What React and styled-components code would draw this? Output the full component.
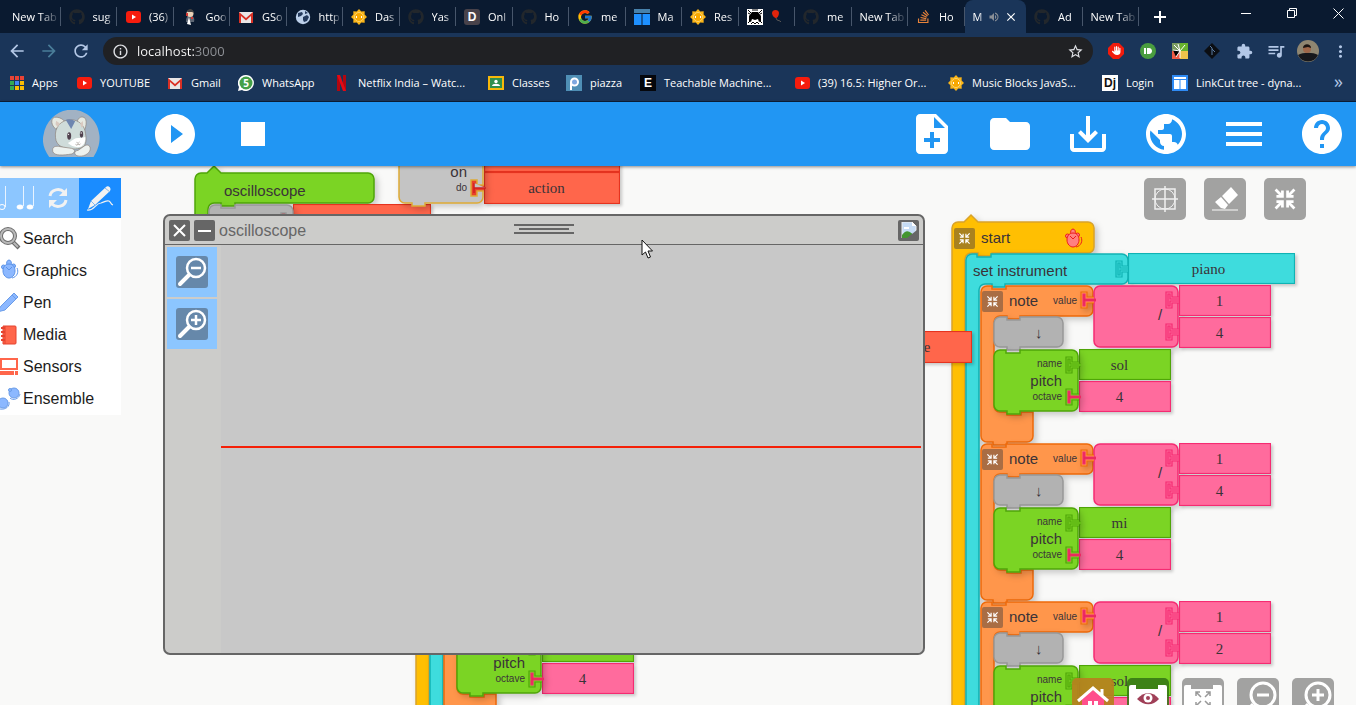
import React from "react";
import styled, { createGlobalStyle, css } from "styled-components";
import { FaGithub, FaStackOverflow, FaHand } from "react-icons/fa6";
import { FcGoogle } from "react-icons/fc";
import {
  MdArrowBack, MdArrowForward, MdRefresh, MdInfoOutline, MdStarBorder, MdExtension, MdQueueMusic,
  MdMoreVert, MdPlayCircleFilled, MdStop, MdNoteAdd, MdFolder, MdSaveAlt, MdPublic, MdMenu, MdHelp,
  MdVolumeUp, MdClose,
} from "react-icons/md";

const Global = createGlobalStyle`
  *, *::before, *::after { box-sizing: border-box; }
  body { margin: 0; overflow: hidden; font-family: "Liberation Sans", Arial, sans-serif; }
  button { font: inherit; color: inherit; background: none; border: 0; padding: 0; margin: 0; }
  svg { display: block; flex: none; }
`;

const Page = styled.div`
  display: flex;
  flex-direction: column;
  height: 100vh;
  background: #f9f9f8;
`;

/* ---------- browser ---------- */

const Browser = styled.header`
  flex: none;
  background: #1a3559;
  color: #fff;
  font-family: "Open Sans", "Noto Sans", sans-serif;
  font-size: 11px;
  border-bottom: 1px solid #0c1f38;
`;
const TabStrip = styled.div`
  display: flex;
  height: 33px;
  background: #0a1a30;
  padding-left: 4px;
`;
const Tabs = styled.div`
  display: flex;
  flex: 0 1 1135px;
  min-width: 0;
`;
const Tab = styled.button`
  position: relative;
  flex: 1 1 0;
  min-width: 0;
  display: flex;
  align-items: center;
  gap: 8px;
  padding: 0 3px 0 8px;
  ${(p) => p.$active
    ? css`background: #1a3559; border-radius: 8px 8px 0 0; gap: 4px; padding-right: 8px;`
    : css`&::after { content: ""; position: absolute; right: 0; top: 7px; height: 19px; width: 1px; background: #47566b; }`}
`;
const TabTitle = styled.span`
  flex: 1 1 0;
  min-width: 0;
  overflow: hidden;
  white-space: nowrap;
  text-align: left;
  mask-image: linear-gradient(to right, #000 60%, transparent 105%);
`;
const NewTabButton = styled.button`
  width: 42px;
  display: grid;
  place-items: center;
`;
const WindowControls = styled.div`
  display: flex;
  gap: 10px;
  margin-left: auto;
`;
const WindowControl = styled.button`
  width: 36px;
  height: 26px;
  display: grid;
  place-items: center;
`;
const Toolbar = styled.div`
  display: flex;
  align-items: center;
  height: 36px;
  padding-left: 1px;
`;
const ToolIcon = styled.button`
  width: 32px;
  height: 32px;
  display: grid;
  place-items: center;
  color: ${(p) => p.$color || "#b3c7e6"};
`;
const Omnibox = styled.label`
  flex: 1;
  display: flex;
  align-items: center;
  gap: 8px;
  height: 28px;
  margin: 0 7px 0 6px;
  padding: 0 9px;
  border-radius: 14px;
  background: #202124;
  color: #dfe1e5;
`;
const Address = styled.input`
  flex: 1;
  min-width: 0;
  border: 0;
  padding: 0;
  outline: 0;
  font-family: inherit;
  font-size: 13px;
  color: transparent;
  background: linear-gradient(to right, #fff 57px, #8f9297 57px);
  background-clip: text;
  -webkit-background-clip: text;
`;
const Bookmarks = styled.nav`
  display: flex;
  align-items: center;
  height: 32px;
  padding: 0 13px 4px 8px;
`;
const Bookmark = styled.a`
  flex: 0 0 ${(p) => p.$width}px;
  display: flex;
  align-items: center;
  gap: 8px;
  color: #fff;
  font-size: 11px;
  line-height: 16px;
  text-decoration: none;
  white-space: nowrap;
`;
const More = styled.button`
  margin-left: auto;
  padding-bottom: 4px;
  font-size: 18px;
  line-height: 16px;
  color: #b3c7e6;
`;
const LetterIcon = styled.span`
  flex: none;
  width: 16px;
  height: 16px;
  border-radius: ${(p) => p.$radius || 0}px;
  background: ${(p) => p.$bg};
  color: ${(p) => p.$fg || "#fff"};
  font: bold 12px/16px "Liberation Sans", sans-serif;
  text-align: center;
`;

const Github = () => <FaGithub size={16} color="#22272c" />;
const Youtube = () => (
  <svg width="16" height="16" viewBox="0 0 16 16"><rect x="1" y="2" width="15" height="12" rx="3" fill="#f61c0d" /><path d="M7 5.600v5l4-2.500z" fill="#fff" /></svg>
);
const Gmail = () => (
  <svg width="16" height="16" viewBox="0 0 16 16"><path d="M1 3h14v11H1z" fill="#e9e6e6" /><path d="M1 14V3l7 6 7-6v11h-2V7l-5 4.500L3 7v7z" fill="#d93025" /></svg>
);
const Sun = () => (
  <svg width="16" height="16" viewBox="0 0 16 16">
    <path d="M8 0l2.300 2.400 3.400-.200-.1 3.400L16 8l-2.400 2.300.1 3.400-3.400-.1L8 16l-2.300-2.400-3.400.1.1-3.400L0 8l2.400-2.400-.1-3.400 3.400.200z" fill="#fbb517" />
    <circle cx="8" cy="8" r="4.500" fill="#f9a800" stroke="#fbd56e" /><path d="M6 7l-1 1 1 1M10 7l1 1-1 1" stroke="#fff" fill="none" />
  </svg>
);
const Globe = () => (
  <svg width="16" height="16" viewBox="0 0 16 16"><circle cx="8" cy="8" r="7.200" fill="#bcd0ea" /><path d="M3 4l4-1 1 2-2 2-3 1zM8 8l4-2 2 2-2 4-3 1-1-2zM10 2l3 2-3 1z" fill="#22395c" /></svg>
);
const Jenkins = () => (
  <svg width="16" height="16" viewBox="0 0 16 16"><path d="M4 13c0-5 1-6 4-6s5 1 4 6z" fill="#5c6674" /><circle cx="8" cy="4.500" r="3.500" fill="#ecd2b8" /><path d="M5 3c1-4 6-4 7 1l-2-1z" fill="#444" /><path d="M4 4h2v3H4z" fill="#d33833" /><path d="M7 8l2 8-4-1z" fill="#fff" /><path d="M9 8h2v2H9z" fill="#d33833" /></svg>
);
const Columns = ({ framed }) => framed
  ? <svg width="16" height="16" viewBox="0 0 16 16"><path d="M0 0h16v16H0z" fill="#2f8bf5" /><path d="M2 2h12v2H2zM2 5h5.500v9H2zM8.500 5H14v9H8.500z" fill="#fff" /></svg>
  : <svg width="16" height="16" viewBox="0 0 16 16"><path d="M0 0h16v4H0z" fill="#4781ab" /><path d="M0 5h7.500v11H0zM8.500 5H16v11H8.500z" fill="#1e90ff" /></svg>;
const Sketch = () => (
  <svg width="16" height="16" viewBox="0 0 16 16"><path d="M0 0h16v16H0z" fill="#fff" /><path d="M5 3h6l3 4v5l-2 1-1-3-3 1-3-1-1 3-2-1V7z" fill="#000" /><path d="M1 1l3 3M15 1l-3 3M1 4l2 1M15 4l-2 1M4 15l2-2 2 2 2-2 2 2M1 14l2-2M15 14l-2-2M5 1h6" stroke="#000" fill="none" /></svg>
);
const Balloon = () => (
  <svg width="11" height="13" viewBox="0 0 11 13"><path d="M1 3C1-1 8-1 8 3c0 3-2 5-3 5S1 6 1 3z" fill="#e0240c" /><path d="M5 8l1 2 3 1 1 1" stroke="#555" fill="none" /></svg>
);
const AppsGrid = () => (
  <svg width="16" height="16" viewBox="0 0 16 16">
    {["#ea4335", "#ea4335", "#ea4335", "#34a853", "#4285f4", "#fbbc04", "#34a853", "#fbbc04", "#fbbc04"].map((c, i) => (
      <rect key={i} x={2 + (i % 3) * 5} y={1 + Math.floor(i / 3) * 5} width="4" height="4" fill={c} />
    ))}
  </svg>
);
const WhatsApp = () => (
  <svg width="16" height="16" viewBox="0 0 16 16"><path d="M8 0a8 8 0 1 1-4 15l-4 1 1-4A8 8 0 0 1 8 0z" fill="#fff" /><circle cx="8" cy="8" r="6.500" fill="#43a047" /><text x="8" y="12" fontSize="10" fontWeight="bold" fill="#fff" textAnchor="middle">5</text></svg>
);
const Netflix = () => (
  <svg width="16" height="16" viewBox="0 0 16 16"><path d="M3 0h3v16H3zM9 0h3v16H9z" fill="#b20710" /><path d="M3 0h3l6 16H9z" fill="#e50914" /></svg>
);
const Classroom = () => (
  <svg width="16" height="16" viewBox="0 0 16 16"><path d="M0 1h16v14H0z" fill="#f7b80a" /><path d="M2 3h12v10H2z" fill="#2f8f4e" /><circle cx="8" cy="6.500" r="1.700" fill="#fff" /><path d="M4 11c0-3 8-3 8 0z" fill="#fff" /></svg>
);
const Piazza = () => (
  <svg width="16" height="16" viewBox="0 0 16 16"><path d="M0 0h16v16H0z" fill="#4f8fb5" /><circle cx="8.500" cy="7" r="3.500" fill="#7fa8e0" stroke="#fff" strokeWidth="2" /><path d="M5 7v8" stroke="#fff" strokeWidth="2" /></svg>
);

const tabs = [
  [null, "New Tab"], [<Github />, "sug"], [<Youtube />, "(36)"], [<Jenkins />, "Goo"], [<Gmail />, "GSo"],
  [<Globe />, "http"], [<Sun />, "Das"], [<Github />, "Yas"],
  [<LetterIcon $bg="#48424a" $radius={3}>D</LetterIcon>, "Onl"], [<Github />, "Ho"], [<FcGoogle size={16} />, "me"],
  [<Columns />, "Ma"], [<Sun />, "Res"], [<Sketch />, <Balloon />], [<Github />, "me"], [null, "New Tab"],
  [<FaStackOverflow size={15} color="#e8833a" />, "Ho"], "active", [<Github />, "Ad"], [null, "New Tab"],
];
const bookmarks = [
  [<AppsGrid />, "Apps", 68], [<Youtube />, "YOUTUBE", 91], [<Gmail />, "Gmail", 71], [<WhatsApp />, "WhatsApp", 96],
  [<Netflix />, "Netflix India – Watc...", 154], [<Classroom />, "Classes", 78],
  [<Piazza />, "piazza", 74],
  [<LetterIcon $bg="#05070c">E</LetterIcon>, "Teachable Machine...", 154], [<Youtube />, "(39) 16.5: Higher Or...", 154],
  [<Sun />, "Music Blocks JavaS...", 154], [<LetterIcon $bg="#fff" $fg="#111">Dj</LetterIcon>, "Login", 70],
  [<Columns framed />, "LinkCut tree - dyna...", 134],
];

const BrowserChrome = () => (
  <Browser>
    <TabStrip>
      <Tabs role="tablist">
        {tabs.map((t, i) => t === "active" ? (
          <Tab key={i} role="tab" aria-selected $active>
            <TabTitle>M</TabTitle>
            <MdVolumeUp size={12} color="#8a8f96" />
            <MdClose size={14} />
          </Tab>
        ) : (
          <Tab key={i} role="tab">{t[0]}<TabTitle>{t[1]}</TabTitle></Tab>
        ))}
      </Tabs>
      <NewTabButton aria-label="New tab"><svg width="12" height="12"><path d="M0 6h12M6 0v12" stroke="#fff" strokeWidth="2" /></svg></NewTabButton>
      <WindowControls>
        <WindowControl aria-label="Minimize"><svg width="10" height="10"><path d="M0 5.500h10" stroke="#fff" /></svg></WindowControl>
        <WindowControl aria-label="Restore"><svg width="10" height="10"><path d="M.5 2.500h7v7h-7zM2.500 2.500v-2h7v7h-2" fill="none" stroke="#fff" /></svg></WindowControl>
        <WindowControl aria-label="Close"><svg width="11" height="11"><path d="M.5.5l10 10M10.500.5l-10 10" stroke="#fff" /></svg></WindowControl>
      </WindowControls>
    </TabStrip>
    <Toolbar>
      <ToolIcon aria-label="Back"><MdArrowBack size={20} /></ToolIcon>
      <ToolIcon aria-label="Forward" $color="#4a7d99"><MdArrowForward size={20} /></ToolIcon>
      <ToolIcon aria-label="Reload"><MdRefresh size={20} /></ToolIcon>
      <Omnibox>
        <MdInfoOutline size={17} />
        <Address aria-label="Address" defaultValue="localhost:3000" />
        <MdStarBorder size={17} />
      </Omnibox>
      <ToolIcon aria-label="Ad blocker">
        <svg width="16" height="16" viewBox="0 0 16 16"><path d="M5 0h6l5 5v6l-5 5H5l-5-5V5z" fill="#f21b0c" /><FaHand x="4" y="3" size={9} color="#fff" /></svg>
      </ToolIcon>
      <ToolIcon aria-label="Pushbullet">
        <svg width="16" height="16" viewBox="0 0 16 16"><circle cx="8" cy="8" r="8" fill="#4a9d3f" /><path d="M4 5h2v6H4zM7 5h2c4 0 4 6 0 6H7z" fill="#fff" /></svg>
      </ToolIcon>
      <ToolIcon aria-label="Screenshot">
        <svg width="16" height="16" viewBox="0 0 16 16"><path d="M0 0h8v8H0z" fill="#7a9b60" /><path d="M8 0h8v8H8z" fill="#68b32e" /><path d="M0 8h8v8H0z" fill="#ef5a45" /><path d="M8 8h8v8H8z" fill="#f0c34b" /><path d="M2 2l6 6M8 8l5-6M6 1l2 7M1 7l7 1-4 6M8 8v7" stroke="#fff" /></svg>
      </ToolIcon>
      <ToolIcon aria-label="Git">
        <svg width="16" height="16" viewBox="0 0 16 16"><path d="M8 0l8 8-8 8-8-8z" fill="#0b0e13" /><path d="M6 3l2 2v7M8 6l3 3" stroke="#5b7ca5" fill="none" /></svg>
      </ToolIcon>
      <ToolIcon aria-label="Extensions"><MdExtension size={17} /></ToolIcon>
      <ToolIcon aria-label="Media"><MdQueueMusic size={20} /></ToolIcon>
      <ToolIcon aria-label="Profile">
        <svg width="22" height="22" viewBox="0 0 22 22"><circle cx="11" cy="11" r="11" fill="#8f8671" /><path d="M1 15c5-3 15-3 20 0a11 11 0 0 1-20 0z" fill="#17181c" /><circle cx="10" cy="9" r="4" fill="#a0684a" /><path d="M6 8c0-5 8-5 8 0l-3-1z" fill="#1b1512" /></svg>
      </ToolIcon>
      <ToolIcon aria-label="Menu"><MdMoreVert size={19} /></ToolIcon>
    </Toolbar>
    <Bookmarks>
      {bookmarks.map(([icon, name, width]) => <Bookmark key={name} href="#" $width={width}>{icon}{name}</Bookmark>)}
      <More>»</More>
    </Bookmarks>
  </Browser>
);

/* ---------- application bar ---------- */

const AppBar = styled.nav`
  flex: none;
  position: relative;
  z-index: 5;
  display: flex;
  align-items: center;
  gap: 30px;
  height: 64px;
  padding: 0 10px 0 43px;
  background: #2196f3;
  color: #fff;
  box-shadow: 0 1px 3px rgba(0, 0, 0, 0.45);
`;
const AppButton = styled.button`
  width: 48px;
  height: 48px;
`;
const LogoButton = styled.button`
  width: 57px;
  margin-right: 21px;
`;
const Spacer = styled.div`
  flex: 1;
`;
const Hamster = () => (
  <svg width="57" height="48" viewBox="130 25 170 144">
    <path d="M148 166C132 142 126 122 131 100 138 55 174 24 216 24s79 32 83 78c2 24-6 46-18 64z" fill="#a2b2c3" />
    <g stroke="#8b8178" strokeWidth="2">
      <path d="M168 82c-14-10-16-30-5-35 16-2 28 6 34 16zM232 62c2-16 16-20 24-12 6 10 2 28-4 40z" fill="#e6e9e2" />
      <path d="M167 108c-4-30 16-54 46-54 24 0 42 18 44 42 2 10 2 16 1 24-2 18-18 22-39 22-26 0-50-8-52-34z" fill="#cfdcda" />
      <path d="M159 150c-4-16 10-18 22-15l34 5c14 4 10 14 0 17-24 4-52 6-56-7zM271 144c2-12-8-17-16-12l-20 14c-14 2-12 12-4 16 18 6 38-6 40-18z" fill="#edf2ef" />
    </g>
    <path d="M198 55l16 27 12-23c-8-6-20-8-28-4z" fill="#6e86b0" />
    <path d="M204 124c8-2 16-12 24-14 10-2 16 0 28-4 2 14-4 26-16 30-14 2-28-4-36-12z" fill="#fff" />
    <path d="M167 68l6 8 8-10-12-9zM241 66l8-8 1 14-5 6z" fill="#d9c9c0" />
    <ellipse cx="208" cy="103" rx="6" ry="11" fill="#51424f" /><ellipse cx="245" cy="98" rx="5" ry="10" fill="#51424f" />
    <circle cx="206" cy="98" r="2" fill="#fff" /><circle cx="244" cy="94" r="2" fill="#fff" />
    <path d="M230 122l5 3 4-4M227 128c2 3 6 3 8-1 2 3 5 3 7-1" fill="none" stroke="#8b8178" strokeWidth="2" />
  </svg>
);

/* ---------- workspace ---------- */

const Workspace = styled.main`
  flex: 1;
  min-height: 0;
  position: relative;
  overflow: hidden;
`;

const C = {
  orange: ["#ff964b", "#ee6a0a"],
  pink: ["#ff6b9d", "#f52b72"],
  green: ["#7bd424", "#4fa508"],
  teal: ["#3edcdd", "#10b3b4"],
  yellow: ["#ffbf02", "#d9a32a"],
  red: ["#ff664b", "#e5331f"],
  gray: ["#b2b2b2", "#989898"],
};

/* A block's place on the canvas, or inside its parent block */
const Node = styled.div`
  position: absolute;
  left: ${(p) => p.$x}px;
  top: ${(p) => p.$y}px;
  width: ${(p) => p.$w}px;
  height: ${(p) => p.$h}px;
  color: #3a3338;
  font-size: 15px;
  line-height: 16px;
`;
const Cell = styled(Node)`
  display: flex;
  align-items: center;
  justify-content: center;
  padding-right: ${(p) => p.$inset ?? 11}px;
  background: ${(p) => C[p.$tone][0]};
  border: 1px solid ${(p) => C[p.$tone][1]};
  box-shadow: 2px 2px 3px rgba(0, 0, 0, 0.2), inset 0 0 1px ${(p) => C[p.$tone][1]};
  font-family: "Liberation Serif", serif;
`;
const Head = styled(Node)`
  display: flex;
  align-items: center;
  gap: 6px;
  padding: ${(p) => p.$pad || "0"};
`;
const PitchText = styled(Node)`
  display: flex;
  flex-direction: column;
  justify-content: space-between;
  align-items: flex-end;
`;
const Small = styled.span`
  font-size: 10px;
  line-height: 12px;
  margin-left: auto;
`;
const Shape = styled.svg`
  position: absolute;
  left: 0;
  top: 0;
  overflow: visible;
  stroke-width: 1.5;
  filter: drop-shadow(3px 3px 3px rgba(0, 0, 0, 0.2));
`;
const Collapse = styled.button`
  width: 21px;
  height: 21px;
  display: grid;
  place-items: center;
  border-radius: 2px;
  background: rgba(75, 65, 60, 0.48);
`;

const Inward = ({ size = 13, width = 1.3 }) => (
  <svg width={size} height={size} viewBox="0 0 14 14" fill="none" stroke="#fff" strokeWidth={width}>
    <path d="M1.500 1.500l4 4M5.500 2v3.500H2M12.500 1.500l-4 4M8.500 2v3.500H12M1.500 12.500l4-4M5.500 12V8.500H2M12.500 12.500l-4-4M8.500 12V8.500H12" />
  </svg>
);

/* Socket of the parent block with the peg of its argument in it; x is the socket's open end */
const Peg = ({ x, y, socket, tone }) => (
  <g transform={`translate(${x} ${y})`}>
    <path d="M0-3H-7V-8H-13V8H-7V3H0" fill={C[socket][0]} stroke={C[socket][1]} strokeWidth="1.200" />
    <path d="M2-1H-9V-6H-11V6H-9V1H2" fill={tone === socket ? C[tone][0] : "#e02a4c"} stroke={C[tone][1]} strokeWidth="1.200" />
  </g>
);

const clampPath = (w, bottom) =>
  `M1 7A6 6 0 0 1 7 1H12V4H26V1H${w - 6}A6 6 0 0 1 ${w} 7V25A6 6 0 0 1 ${w - 6} 31H40V34H27V31H20A6 6 0 0 0 14 37V${bottom}H1Z`;

const Pitch = ({ x, y, name, octave }) => (
  <Node $x={x} $y={y} $w={178} $h={63}>
    <Cell $x={86} $y={0} $w={92} $h={31} $tone="green">{name}</Cell>
    <Cell $x={86} $y={32} $w={92} $h={31} $tone="pink">{octave}</Cell>
    <Shape width="86" height="63" viewBox="0 0 86 63" fill={C.green[0]} stroke={C.green[1]}>
      <path d="M1 7A6 6 0 0 1 7 1H13V4H27V1H79A6 6 0 0 1 85 7V56A6 6 0 0 1 79 62H27V65H14V62H7A6 6 0 0 1 1 56Z" />
      <Peg x={86} y={16} socket="green" tone="green" />
      <Peg x={86} y={48} socket="green" tone="pink" />
    </Shape>
    <PitchText $x={29} $y={9} $w={40} $h={45}><Small>name</Small><span>pitch</span><Small>octave</Small></PitchText>
  </Node>
);

const Note = ({ x, y, denominator, name, octave = 4 }) => (
  <Node $x={x} $y={y} $w={291} $h={158}>
    <Shape width="114" height="158" viewBox="0 0 114 158" fill={C.orange[0]} stroke={C.orange[1]}>
      <path d="M1 7A6 6 0 0 1 7 1H12V4H26V1H107A6 6 0 0 1 113 7V25A6 6 0 0 1 107 31H40V34H27V31H20A6 6 0 0 0 14 37V120A6 6 0 0 0 20 127H27V130H41V127H53V151A6 6 0 0 1 47 157H27V160H13V157H7A6 6 0 0 1 1 151Z" />
    </Shape>
    <Shape width="200" height="64" viewBox="0 0 200 64" fill={C.pink[0]} stroke={C.pink[1]}>
      <rect x="114" y="1" width="84" height="61" rx="6" />
      <Peg x={199} y={15} socket="pink" tone="pink" />
      <Peg x={199} y={47} socket="pink" tone="pink" />
      <Peg x={114} y={15} socket="orange" tone="pink" />
    </Shape>
    <Head $x={178} $y={22} $w={10} $h={16}>/</Head>
    <Cell $x={199} $y={0} $w={92} $h={31} $tone="pink">1</Cell>
    <Cell $x={199} $y={32} $w={92} $h={31} $tone="pink">{denominator}</Cell>
    <Head $x={2} $y={2} $w={95} $h={28}><Collapse aria-label="Collapse note"><Inward /></Collapse>note<Small>value</Small></Head>
    <Node $x={13} $y={31} $w={71} $h={32}>
      <Shape width="71" height="32" viewBox="0 0 71 32" fill={C.gray[0]} stroke={C.gray[1]}>
        <path d="M1 7A6 6 0 0 1 7 1H14V4H27V1H64A6 6 0 0 1 70 7V25A6 6 0 0 1 64 31H27V34H14V31H7A6 6 0 0 1 1 25Z" />
      </Shape>
      <Head $x={42} $y={9} $w={15} $h={16}>↓</Head>
    </Node>
    <Pitch x={13} y={64} name={name} octave={octave} />
  </Node>
);

const SmallMouse = ({ fill = "#ff8080", line = "#ee1c1c", size = 20 }) => (
  <svg width={size} height={size} viewBox="0 0 20 20" fill={fill} stroke={line} strokeWidth="1">
    <path d="M10 1c2 0 3 3 2 5H8C7 4 8 1 10 1z" /><circle cx="4.500" cy="8" r="2" /><circle cx="14.500" cy="7" r="2" />
    <path d="M10 5c4 0 6 3 6 7s-3 7-6 7-6-3-6-7 2-7 6-7z" /><path d="M18 9c2 4 0 9-5 10M7 8l3 3 3-3" fill="none" />
  </svg>
);

const StartStack = ({ x, y, children }) => (
  <Node $x={x} $y={y} $w={344} $h={700}>
    <Shape width="144" height="700" viewBox="0 0 144 700" fill={C.yellow[0]} stroke={C.yellow[1]}>
      <path d="M1 12A6 6 0 0 1 7 6H13L20-1 27 6H137A6 6 0 0 1 143 12V31A6 6 0 0 1 137 37H41V40H27V37H20A6 6 0 0 0 14 43V700H1Z" />
    </Shape>
    <Head $x={3} $y={7} $w={138} $h={30} $pad="0 9px 0 0">
      <Collapse aria-label="Collapse start"><Inward /></Collapse>start
      <Small as="div"><SmallMouse /></Small>
    </Head>
    <Node $x={14} $y={37} $w={330} $h={32}>
      <Shape width="164" height="600" viewBox="0 0 164 600" fill={C.teal[0]} stroke={C.teal[1]}>
        <path d={clampPath(163, 660)} />
        <Peg x={164} y={16} socket="teal" tone="teal" />
      </Shape>
      <Head $x={8} $y={10} $w={110} $h={16}>set instrument</Head>
      <Cell $x={163} $y={0} $w={167} $h={31} $tone="teal" $inset={6}>piano</Cell>
    </Node>
    {children}
  </Node>
);

/* ---------- palette ---------- */

const Palette = styled.aside`
  position: absolute;
  left: 0;
  top: 12px;
  width: 121px;
  background: #fff;
`;
const PaletteTabs = styled.div`
  display: flex;
  height: 40px;
  background: #8cc6ff;
`;
const PaletteTab = styled.button`
  width: ${(p) => p.$width}px;
  display: grid;
  place-items: center;
  overflow: hidden;
  background: ${(p) => (p.$active ? "#1a8cff" : "none")};
`;
const PaletteList = styled.ul`
  margin: 0;
  padding: 5px 0 0;
  list-style: none;
`;
const PaletteItem = styled.button`
  display: flex;
  align-items: center;
  gap: 2px;
  width: 100%;
  height: 32px;
  font-size: 16px;
  color: #1c1c1c;
`;

const paletteIcons = {
  Search: <svg width="21" height="24" viewBox="0 0 21 24" fill="none"><path d="M13 15l6 6" stroke="#6b6b6b" strokeWidth="4" /><path d="M13 15l5 5" stroke="#b9b9b9" strokeWidth="2" /><circle cx="8" cy="9" r="7" stroke="#6b6b6b" strokeWidth="4" /><circle cx="8" cy="9" r="7" stroke="#b9b9b9" strokeWidth="2" /></svg>,
  Graphics: <svg width="21" height="24" viewBox="1 0 21 24"><SmallMouse fill="#8cb8ff" line="#5b93e8" size={20} /></svg>,
  Pen: <svg width="21" height="24" viewBox="0 0 21 24" fill="#8cb8ff" stroke="#6a9ce8"><path d="M-3 21L1 15 14 2l4 4L5 19zM12 4l4 4" /></svg>,
  Media: <svg width="21" height="24" viewBox="0 0 21 24"><path d="M3 3h12a1 1 0 0 1 1 1v16a1 1 0 0 1-1 1H3z" fill="#ff664b" stroke="#e5432f" /><path d="M5 3v18" stroke="#e5432f" /><path d="M1 5h4M1 9h4M1 13h4M1 17h4" stroke="#e5432f" strokeWidth="2" /></svg>,
  Sensors: <svg width="21" height="24" viewBox="0 0 21 24" fill="#ff664b"><path d="M1 4h16v10H1z" fill="none" stroke="#ff664b" strokeWidth="2" /><path d="M0 16h14v4H0zM15 16h3v4h-3z" /></svg>,
  Ensemble: <svg width="21" height="24" viewBox="0 0 21 24" fill="#8cb8ff" stroke="#6a9ce8"><circle cx="14" cy="6" r="5" /><circle cx="10" cy="3" r="1.500" /><circle cx="3" cy="16" r="5" /><path d="M10 11c3 3 9 1 10-4M0 22c6 1 10-3 9-7" fill="none" /></svg>,
};

/* ---------- tool buttons over the canvas ---------- */

const ToolRow = styled.div`
  position: absolute;
  display: flex;
  ${(p) => (p.$top ? "top: 12px; right: 50px; gap: 18px;" : "bottom: -15px; right: 22px; gap: 13px;")}
`;
const Tool = styled.button`
  width: 42px;
  height: 42px;
  display: grid;
  place-items: center;
  overflow: hidden;
  border-radius: 5px;
  background: ${(p) => p.$bg || "rgba(0, 0, 0, 0.35)"};
`;

/* ---------- oscilloscope window ---------- */

const Window = styled.section`
  position: absolute;
  left: 163px;
  top: 48px;
  width: 762px;
  height: 441px;
  display: flex;
  flex-direction: column;
  overflow: hidden;
  border: 2px solid #666;
  border-radius: 7px;
  background: #ccccca;
`;
const TitleBar = styled.div`
  position: relative;
  flex: none;
  display: flex;
  align-items: center;
  gap: 4px;
  height: 29px;
  padding: 0 4px;
  border-bottom: 1px solid #666;
  color: #666;
  font-size: 16px;
`;
const TitleButton = styled.button`
  width: 21px;
  height: 21px;
  display: grid;
  place-items: center;
  border-radius: 2px;
  background: #666;
`;
const WindowTitle = styled.h1`
  margin: 0;
  padding-top: 2px;
  font-size: 16px;
  font-weight: normal;
`;
const Grip = styled.div`
  position: absolute;
  left: 50%;
  top: 8px;
  width: 60px;
  height: 10px;
  margin-left: -30px;
  border: solid #666;
  border-width: 2px 0;
  &::after {
    content: "";
    display: block;
    height: 2px;
    margin: 2px 5px;
    background: #666;
  }
`;
const WindowBody = styled.div`
  flex: 1;
  display: flex;
`;
const SideTools = styled.div`
  display: flex;
  flex-direction: column;
  gap: 2px;
  width: 56px;
  padding: 2px;
`;
const SideTool = styled.button`
  width: 50px;
  height: 50px;
  display: grid;
  place-items: center;
  background: #8cc6ff;
`;
const Scope = styled.div`
  flex: 1;
  display: flex;
  align-items: center;
  margin-right: 2px;
  padding-bottom: 4px;
  background: #c8c8c8;
`;
const Signal = styled.div`
  flex: 1;
  height: 2px;
  background: #f52008;
`;
const ZoomIcon = ({ plus }) => (
  <svg width="32" height="32" viewBox="0 0 32 32" fill="none" stroke="#fff">
    <rect width="32" height="32" rx="3" fill="#6688aa" stroke="none" />
    <circle cx="20" cy="12" r="9" strokeWidth="2.500" />
    <path d="M13 19L4 28" strokeWidth="4" strokeLinecap="round" />
    <path d={plus ? "M15 12h10M20 7v10" : "M15 12h10"} strokeWidth="2.500" />
  </svg>
);
const Pointer = styled.svg`
  position: absolute;
  left: 641px;
  top: 73px;
`;

export default function App() {
  return (
    <Page>
      <Global />
      <BrowserChrome />
      <AppBar>
        <LogoButton aria-label="About"><Hamster /></LogoButton>
        <AppButton aria-label="Play"><MdPlayCircleFilled size={48} /></AppButton>
        <AppButton aria-label="Stop"><MdStop size={48} /></AppButton>
        <Spacer />
        <AppButton aria-label="New project"><MdNoteAdd size={48} /></AppButton>
        <AppButton aria-label="Load project"><MdFolder size={48} /></AppButton>
        <AppButton aria-label="Save project"><MdSaveAlt size={48} /></AppButton>
        <AppButton aria-label="Planet"><MdPublic size={48} /></AppButton>
        <AppButton aria-label="Menu"><MdMenu size={48} /></AppButton>
        <AppButton aria-label="Help"><MdHelp size={48} /></AppButton>
      </AppBar>

      <Workspace>
        <Node $x={194} $y={0} $w={240} $h={120}>
          <Shape width="182" height="120" viewBox="0 0 182 120" fill={C.green[0]} stroke={C.green[1]}>
            <path d="M1 13A6 6 0 0 1 7 7H13L20 0 27 7H174A6 6 0 0 1 180 13V31A6 6 0 0 1 174 37H41V40H27V37H20A6 6 0 0 0 14 43V120H1Z" />
          </Shape>
          <Head $x={30} $y={16} $w={120} $h={18}>oscilloscope</Head>
          <Cell $x={99} $y={38} $w={138} $h={31} $tone="red" />
          <Shape width="100" height="80" viewBox="0 0 100 80" fill={C.gray[0]} stroke={C.gray[1]}>
            <path d="M15 45A6 6 0 0 1 21 39H27V42H41V39H93A6 6 0 0 1 99 45V80H15Z" />
            <path d="M87 47h5v14h-5z" fill="#cc2030" />
          </Shape>
        </Node>

        <Node $x={398} $y={-27} $w={222} $h={66}>
          <Cell $x={86} $y={0} $w={136} $h={33} $tone="red" />
          <Cell $x={86} $y={33} $w={136} $h={32} $tone="red">action</Cell>
          <Shape width="86" height="64" viewBox="0 0 86 64" fill="#c4c4c4" stroke="#deaa35">
            <path d="M1 0H85V58A6 6 0 0 1 79 64H27V67H14V64H7A6 6 0 0 1 1 58Z" />
            <path d="M86 46H79V41H73V57H79V52H86" fill="#e8402a" />
            <path d="M88 49H76V44M76 49V54" stroke="#d01f1f" />
          </Shape>
          <PitchText $x={30} $y={25} $w={39} $h={30}><span>on</span><Small>do</Small></PitchText>
        </Node>

        <StartStack x={415} y={332}>
          <Note x={28} y={69} denominator={4} name="mi" />
          <Note x={29} y={227} denominator={2} name="sol" />
        </StartStack>

        <StartStack x={951} y={50}>
          <Note x={29} y={69} denominator={4} name="sol" />
          <Note x={29} y={227} denominator={4} name="mi" />
          <Note x={29} y={385} denominator={2} name="sol" />
        </StartStack>
        <Cell $x={882} $y={165} $w={90} $h={32} $tone="red" $inset={0}>e</Cell>

        <Palette>
          <PaletteTabs>
            <PaletteTab $width={37} aria-label="Rhythm">
              <svg width="37" height="28" viewBox="0 0 37 28" fill="#fff" stroke="#fff">
                <path d="M5.500 2v21M23.500 2v20M33.500 2v20" strokeWidth="1" opacity=".8" /><ellipse cx="2" cy="23" rx="3" ry="2.500" fill="none" />
                <ellipse cx="20" cy="23" rx="3" ry="2" /><ellipse cx="30" cy="23" rx="3" ry="2" />
              </svg>
            </PaletteTab>
            <PaletteTab $width={42} aria-label="Flow">
              <svg width="22" height="22" viewBox="0 0 22 22" fill="none" stroke="#f2f2f2" strokeWidth="3">
                <path d="M3 9c1-7 10-8 14-4M19 13c-1 7-10 8-14 4" /><path d="M20 1v8h-8zM2 21v-8h8z" fill="#f2f2f2" stroke="none" />
              </svg>
            </PaletteTab>
            <PaletteTab $width={42} $active aria-label="Artwork">
              <svg width="28" height="28" viewBox="0 0 28 28">
                <path d="M5 17L20 3c2-2 6 1 4 4L9 21l-7 4z" fill="#f2f2f2" /><path d="M19 4l5 4M5 17l4 4" stroke="#8bb8e8" />
                <path d="M1 26c8 1 8-7 14-7 4-1 5-3 8-2 3 2 1 3 4 4" fill="none" stroke="#f2f2f2" strokeWidth="1.200" />
              </svg>
            </PaletteTab>
          </PaletteTabs>
          <PaletteList>
            {Object.entries(paletteIcons).map(([name, icon]) => <li key={name}><PaletteItem>{icon}{name}</PaletteItem></li>)}
          </PaletteList>
        </Palette>

        <ToolRow $top>
          <Tool aria-label="Grid">
            <svg width="26" height="26" viewBox="0 0 26 26" fill="none" stroke="#f0f0f0" strokeWidth="1.500"><path d="M3 3h20v20H3zM13 0v26M0 13h26" /><circle cx="13" cy="13" r="10" strokeWidth="1" /></svg>
          </Tool>
          <Tool aria-label="Clear">
            <svg width="26" height="26" viewBox="0 0 26 26" fill="#fff"><path d="M19 1l7 8-9 9-7-8zM9 11l7 8-3 4-4-1-6-6z" /><path d="M0 24h26" stroke="#ddd" strokeWidth="1.500" /></svg>
          </Tool>
          <Tool aria-label="Collapse blocks"><Inward size={24} width={1.6} /></Tool>
        </ToolRow>

        <ToolRow>
          <Tool aria-label="Home" $bg="rgba(182, 128, 30, 0.92)">
            <svg width="34" height="32" viewBox="0 0 34 32"><path d="M6 16L17 7l11 9v16H6z" fill="#ff4f8b" /><path d="M2 18L17 5l15 13M26 6v6" fill="none" stroke="#fff" strokeWidth="3" /><path d="M12 18h4v4h-4zM18 18h4v4h-4z" fill="#fff" /></svg>
          </Tool>
          <Tool aria-label="Show blocks" $bg="rgba(50, 115, 20, 0.85)">
            <svg width="38" height="32" viewBox="0 0 38 32"><path d="M0 4q0-2 2-2h5v4h22V2h7q2 0 2 2v28H0z" fill="#fff" /><path d="M8 16c7-8 16-8 22 0-6 7-15 7-22 0z" fill="#a04058" /><circle cx="19" cy="15" r="4.500" fill="#fff" /><circle cx="19" cy="15" r="2" fill="#a04058" /></svg>
          </Tool>
          <Tool aria-label="Expand blocks">
            <svg width="38" height="32" viewBox="0 0 38 32"><path d="M0 4q0-2 2-2h5v4h22V2h7q2 0 2 2v28H0z" fill="#fff" /><path d="M12 13V9h4M12 9l5 5M26 13V9h-4M26 9l-5 5M12 19v4h4M12 23l5-5M26 19v4h-4M26 23l-5-5" fill="none" stroke="#999" strokeWidth="1.500" /></svg>
          </Tool>
          <Tool aria-label="Zoom out">
            <svg width="38" height="38" viewBox="0 0 38 38" fill="none" stroke="#fff"><circle cx="24" cy="15" r="12" strokeWidth="3" /><path d="M18 15h12M14 24L4 34" strokeWidth="3" /></svg>
          </Tool>
          <Tool aria-label="Zoom in">
            <svg width="38" height="38" viewBox="0 0 38 38" fill="none" stroke="#fff"><circle cx="24" cy="15" r="12" strokeWidth="3" /><path d="M18 15h12M24 9v12M14 24L4 34" strokeWidth="3" /></svg>
          </Tool>
        </ToolRow>

        <Window>
          <TitleBar>
            <TitleButton aria-label="Close"><svg width="13" height="13"><path d="M1 1l11 11M12 1L1 12" stroke="#fff" strokeWidth="2" /></svg></TitleButton>
            <TitleButton aria-label="Minimize"><svg width="13" height="13"><path d="M0 7h13" stroke="#fff" strokeWidth="2" /></svg></TitleButton>
            <WindowTitle>oscilloscope</WindowTitle>
            <Grip />
            <Spacer />
            <TitleButton aria-label="Maximize">
              <svg width="16" height="16" viewBox="0 0 16 16"><path d="M1 0h10l4 4v12H1z" fill="#c6dcf5" stroke="#eee" /><path d="M1 13c4-6 8-5 14 3H1z" fill="#43952f" /><path d="M3 6h5" stroke="#fff" strokeWidth="2" /><path d="M6 16L16 8v8z" fill="#666" /><path d="M11 0v4h4z" fill="#fff" /></svg>
            </TitleButton>
          </TitleBar>
          <WindowBody>
            <SideTools>
              <SideTool aria-label="Zoom out"><ZoomIcon /></SideTool>
              <SideTool aria-label="Zoom in"><ZoomIcon plus /></SideTool>
            </SideTools>
            <Scope><Signal /></Scope>
          </WindowBody>
        </Window>
        <Pointer width="13" height="20" viewBox="0 0 13 20"><path d="M1 1v15l3.500-3 2.500 6 2.500-1-2.500-6h4.500z" fill="#fff" stroke="#111" /></Pointer>
      </Workspace>
    </Page>
  );
}
